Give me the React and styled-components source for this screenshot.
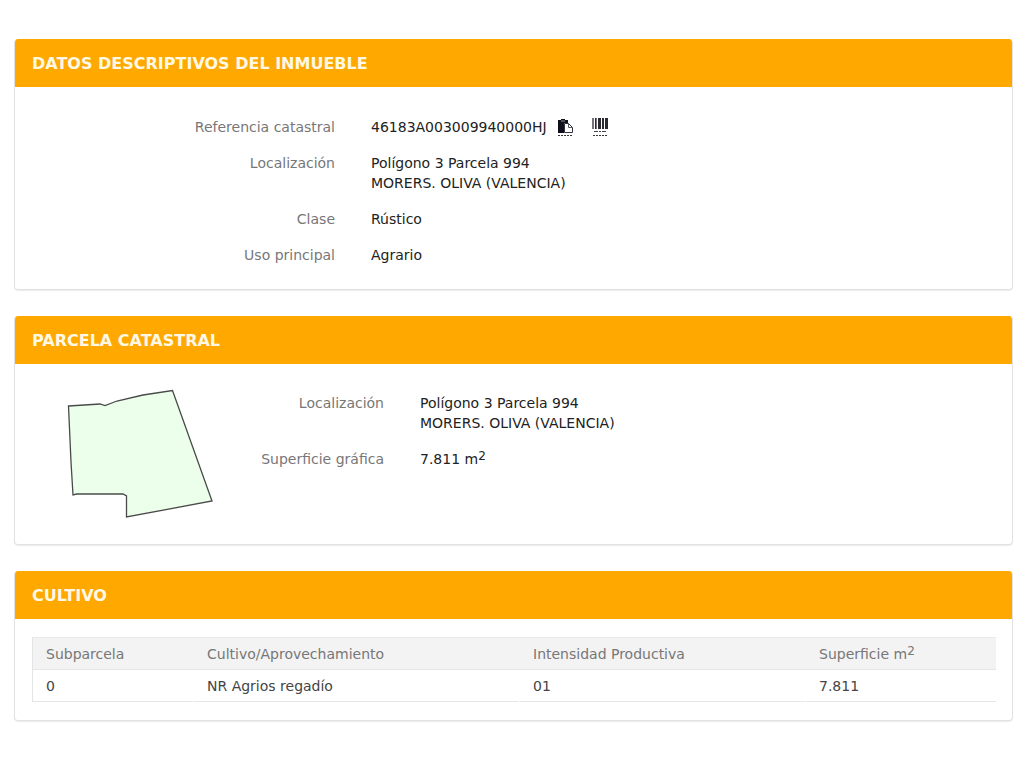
import React from "react";
import styled, { createGlobalStyle } from "styled-components";

const GlobalStyle = createGlobalStyle`
  *, *::before, *::after { box-sizing: border-box; }
  body {
    margin: 0;
    background: #fff;
    color: #222;
    font-family: Verdana, "DejaVu Sans", sans-serif;
    font-size: 14px;
    line-height: 20px;
  }
`;

const Page = styled.main`
  display: flex;
  flex-direction: column;
  gap: 26px;
  padding: 39px 11px 48px 14px;
`;

const Panel = styled.section`
  border: 1px solid #e2e2e2;
  border-top: 0;
  border-radius: 4px;
  box-shadow: 0 1px 1px rgba(0, 0, 0, 0.08);
  overflow: hidden;
`;

const PanelTitle = styled.h2`
  margin: 0;
  padding: 15px 17px 13px;
  background: #ffa800;
  color: #fff8e4;
  font-size: 16px;
  font-weight: 700;
  line-height: 20px;
`;

const PanelBody = styled.div`
  display: flex;
  padding: ${(p) => p.$padding};
`;

const Details = styled.dl`
  flex: 1;
  display: grid;
  grid-template-columns: minmax(0, ${(p) => p.$label}) minmax(0, 1fr);
  align-content: start;
  column-gap: 36px;
  row-gap: 16px;
  margin: 0;
  padding-top: 6px;
`;

const Label = styled.dt`
  color: #777;
  text-align: right;
`;

const Value = styled.dd`
  display: flex;
  align-items: center;
  margin: 0;
`;

const Sup = styled.sup`
  font-size: 12px;
  line-height: 0;
  vertical-align: 4px;
`;

const IconButton = styled.button`
  display: block;
  margin-left: ${(p) => p.$gap};
  padding: 0;
  border: 0;
  background: none;
  cursor: pointer;

  svg { display: block; }
`;

const ParcelLink = styled.a`
  flex: none;
  display: block;
  margin-left: 48px;

  svg { display: block; }
`;

const Table = styled.table`
  width: 100%;
  table-layout: fixed;
  border-collapse: separate;
  border-spacing: 0;
  border-left: 1px solid #e4e4e4;
  text-align: left;
`;

const HeadCell = styled.th`
  width: ${(p) => p.$width};
  height: 33px;
  padding: 0 13px;
  border-top: 1px solid #e9e9e9;
  border-bottom: 1px solid #e6e6e6;
  background: #f3f3f3;
  color: #777;
  font-weight: 400;
`;

const Cell = styled.td`
  height: 32px;
  padding: 0 13px;
  border-right: 2px solid #fff;
  border-bottom: 1px solid #e6e6e6;
  color: #444;

  &:last-child { border-right: 0; }
`;

const columns = [
  { width: "161px", title: "Subparcela" },
  { width: "326px", title: "Cultivo/Aprovechamiento" },
  { width: "286px", title: "Intensidad Productiva" },
  { width: "190px", title: <>Superficie m<Sup>2</Sup></> },
];

const crops = [["0", "NR Agrios regadío", "01", "7.811"]];

function CopyIcon() {
  return (
    <svg width="16" height="20" viewBox="0 0 16 20" aria-hidden="true">
      <path d="M1 3h3V2h4v1h3v3H7v10H1z" fill="#10101c" />
      <path d="M4 4h4" stroke="#8a8a90" />
      <path d="M7.500 6.500h4l4 4v5h-8z" fill="#fff" stroke="#333340" />
      <path d="M11.500 6.500V10.500H15" fill="none" stroke="#555560" />
      <path d="M1 18.500h14" stroke="#333" strokeDasharray="2 1" />
    </svg>
  );
}

function BarcodeIcon() {
  return (
    <svg width="18" height="20" viewBox="0 0 18 20" aria-hidden="true">
      <path d="M1 1h2v11H1zM5 1h1v11H5z" fill="#77717c" />
      <path d="M4 1h1v11H4zM7 1h3v11H7zM11 1h2v11h-2zM14 1h3v11h-3z" fill="#292932" />
      <path d="M3 14.500h4M8 14.500h2M11 14.500h4" stroke="#444" />
      <path d="M2 18.500h15" stroke="#333" strokeDasharray="2 1" />
    </svg>
  );
}

function ParcelShape() {
  return (
    <svg width="150" height="132" viewBox="0 0 150 132" role="img" aria-label="Parcela">
      <path
        d="M5.500 19L37 17L42 18.500L54 14L80 8L109.500 3.500L149 114L63.500 130V109L60 107H14L10 108L8 75Z"
        fill="#ebffeb"
        stroke="#494b49"
        strokeWidth="1.300"
      />
    </svg>
  );
}

function Place() {
  return (
    <Value>
      <span>
        Polígono 3 Parcela 994
        <br />
        MORERS. OLIVA (VALENCIA)
      </span>
    </Value>
  );
}

export default function App() {
  return (
    <>
      <GlobalStyle />
      <Page>
        <Panel>
          <PanelTitle>DATOS DESCRIPTIVOS DEL INMUEBLE</PanelTitle>
          <PanelBody $padding="24px 18px 24px">
            <Details $label="302px">
              <Label>Referencia catastral</Label>
              <Value>
                46183A003009940000HJ
                <IconButton $gap="10px" type="button" aria-label="Copiar referencia">
                  <CopyIcon />
                </IconButton>
                <IconButton $gap="18px" type="button" aria-label="Código de barras">
                  <BarcodeIcon />
                </IconButton>
              </Value>
              <Label>Localización</Label>
              <Place />
              <Label>Clase</Label>
              <Value>Rústico</Value>
              <Label>Uso principal</Label>
              <Value>Agrario</Value>
            </Details>
          </PanelBody>
        </Panel>

        <Panel>
          <PanelTitle>PARCELA CATASTRAL</PanelTitle>
          <PanelBody $padding="23px 18px 25px 0">
            <ParcelLink href="#parcela">
              <ParcelShape />
            </ParcelLink>
            <Details $label="171px">
              <Label>Localización</Label>
              <Place />
              <Label>Superficie gráfica</Label>
              <Value>
                <span>
                  7.811 m<Sup>2</Sup>
                </span>
              </Value>
            </Details>
          </PanelBody>
        </Panel>

        <Panel>
          <PanelTitle>CULTIVO</PanelTitle>
          <PanelBody $padding="18px 17px">
            <Table>
              <thead>
                <tr>
                  {columns.map((c) => (
                    <HeadCell key={c.width} $width={c.width} scope="col">
                      {c.title}
                    </HeadCell>
                  ))}
                </tr>
              </thead>
              <tbody>
                {crops.map((row) => (
                  <tr key={row[0]}>
                    {row.map((value) => (
                      <Cell key={value}>{value}</Cell>
                    ))}
                  </tr>
                ))}
              </tbody>
            </Table>
          </PanelBody>
        </Panel>
      </Page>
    </>
  );
}
